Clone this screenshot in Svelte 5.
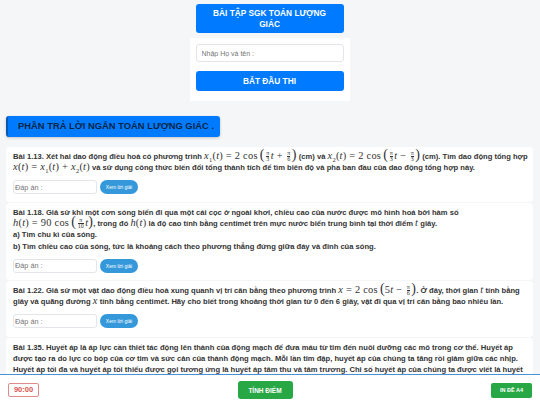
<script>
  const answerLabel = 'Đáp án :';
</script>

{#snippet frac(a, b)}
  <span class="frac"><span>{a}</span><span class="den">{b}</span></span>
{/snippet}

{#snippet answer()}
  <div class="answer">
    <input placeholder={answerLabel} />
    <button>Xem lời giải</button>
  </div>
{/snippet}

<div class="page">
  <div class="top">
    <div class="title">BÀI TẬP SGK TOÁN LƯỢNG GIÁC</div>
    <div class="start-box">
      <input class="name" placeholder="Nhập Họ và tên :" />
      <button class="start">BẮT ĐẦU THI</button>
    </div>
  </div>

  <h2 class="section">PHẦN TRẢ LỜI NGẮN TOÁN LƯỢNG GIÁC .</h2>

  <div class="card c1">
    <p>Bài 1.13. Xét hai dao động điều hoà có phương trình <span class="m"><i>x</i><sub>1</sub>(<i>t</i>) = 2 cos</span> <span class="m"><span class="paren">(</span>{@render frac('π', '3')}<i>t</i> + {@render frac('π', '6')}<span class="paren">)</span></span> (cm) và <span class="m"><i>x</i><sub>2</sub>(<i>t</i>) = 2 cos</span> <span class="m"><span class="paren">(</span>{@render frac('π', '3')}<i>t</i> − {@render frac('π', '3')}<span class="paren">)</span></span> (cm). Tìm dao động tổng hợp<br />
    <span class="m"><i>x</i>(<i>t</i>) = <i>x</i><sub>1</sub>(<i>t</i>) + <i>x</i><sub>2</sub>(<i>t</i>)</span> và sử dụng công thức biến đổi tổng thành tích để tìm biên độ và pha ban đầu của dao động tổng hợp này.</p>
    {@render answer()}
  </div>

  <div class="card c2">
    <p>Bài 1.18. Giả sử khi một cơn sóng biển đi qua một cái cọc ở ngoài khơi, chiều cao của nước được mô hình hoá bởi hàm số<br />
    <span class="m"><i>h</i>(<i>t</i>) = 90 cos</span> <span class="m"><span class="paren">(</span>{@render frac('π', '10')}<i>t</i><span class="paren">)</span></span>, trong đó <span class="m"><i>h</i>(<i>t</i>)</span> là độ cao tính bằng centimét trên mực nước biển trung bình tại thời điểm <span class="m"><i>t</i></span> giây.<br />
    a) Tìm chu kì của sóng.<br />
    b) Tìm chiều cao của sóng, tức là khoảng cách theo phương thẳng đứng giữa đáy và đỉnh của sóng.</p>
    {@render answer()}
  </div>

  <div class="card c3">
    <p>Bài 1.22. Giả sử một vật dao động điều hoà xung quanh vị trí cân bằng theo phương trình <span class="m"><i>x</i> = 2 cos</span> <span class="m"><span class="paren">(</span>5<i>t</i> − {@render frac('π', '6')}<span class="paren">)</span></span>. Ở đây, thời gian <span class="m"><i>t</i></span> tính bằng<br />
    giây và quãng đường <span class="m"><i>x</i></span> tính bằng centimét. Hãy cho biết trong khoảng thời gian từ 0 đến 6 giây, vật đi qua vị trí cân bằng bao nhiêu lần.</p>
    {@render answer()}
  </div>

  <div class="card">
    <p>Bài 1.35. Huyết áp là áp lực cần thiết tác động lên thành của động mạch để đưa máu từ tim đến nuôi dưỡng các mô trong cơ thể. Huyết áp<br />
    được tạo ra do lực co bóp của cơ tim và sức cản của thành động mạch. Mỗi lần tim đập, huyết áp của chúng ta tăng rồi giảm giữa các nhịp.<br />
    Huyết áp tối đa và huyết áp tối thiểu được gọi tương ứng là huyết áp tâm thu và tâm trương. Chỉ số huyết áp của chúng ta được viết là huyết</p>
  </div>
</div>

<div class="footer">
  <div class="timer">90:00</div>
  <button class="score">TÍNH ĐIỂM</button>
  <button class="print">IN ĐỀ A4</button>
</div>

<style>
  :global(body) { margin: 0; background: #f4f6f8; font-family: "Liberation Sans", Arial, sans-serif; overflow: hidden; }
  .page { height: 405px; overflow: hidden; padding: 4px 7px 0 6px; box-sizing: border-box; }
  .top { width: 160px; margin: 0 auto; display: flex; flex-direction: column; align-items: center; }
  .title { width: 148px; height: 29px; box-sizing: border-box; padding: 4px 12px; background: #007bff; color: #fff; border-radius: 3px; font-size: 8.3px; font-weight: bold; line-height: 10.5px; text-align: center; }
  .start-box { width: 160px; height: 63px; margin-top: 5px; box-sizing: border-box; padding: 6px; background: #fff; display: flex; flex-direction: column; gap: 9px; }
  .name { height: 18px; width: 100%; box-sizing: border-box; padding: 0 5px; border: 1px solid #e2e6ea; border-radius: 3px; font: 7px "Liberation Sans", sans-serif; }
  .start { height: 20px; border: 0; border-radius: 3px; background: #007bff; color: #fff; font: bold 8.3px "Liberation Sans", sans-serif; }
  .section { width: 214px; height: 21px; margin: 15px 0 0; box-sizing: border-box; padding-left: 10px; background: #007bff; border-left: 2px solid #0a58b0; border-radius: 3px; box-shadow: 0 1px 3px rgba(0, 0, 0, 0.2); color: #0b2545; font-size: 9.4px; font-weight: bold; line-height: 20px; white-space: nowrap; }
  .card { margin-top: 10px; padding: 4px 7px 0; background: #fff; border-radius: 4px; box-sizing: border-box; }
  .card + .card { margin-top: 1px; }
  .c1 { height: 55px; }
  .c2 { height: 77px; }
  .c3 { height: 56px; }
  p { margin: 0; color: #333; font-size: 7.6px; font-weight: bold; line-height: 11.2px; white-space: nowrap; }
  .m { font: normal 10.4px/0 "Liberation Serif", serif; letter-spacing: 0.25px; white-space: nowrap; }
  .m i { font-style: italic; }
  sub { font-size: 6.5px; line-height: 0; }
  .paren { font-size: 14px; line-height: 0; }
  .frac { display: inline-flex; flex-direction: column; align-items: center; vertical-align: middle; height: 12px; margin: -5px 1px; padding: 0 0.5px; font-size: 6px; line-height: 5.5px; letter-spacing: 0; }
  .den { align-self: stretch; text-align: center; border-top: 0.5px solid #333; }
  .answer { display: flex; gap: 3px; margin-top: 7px; height: 14px; }
  .answer input { width: 84px; height: 14px; box-sizing: border-box; padding: 0 1px; border: 1px solid #e2e6ea; border-radius: 3px; font: 7.3px "Liberation Sans", sans-serif; }
  .answer button { width: 38px; height: 14px; padding: 0; border: 0; border-radius: 7px; background: #3498db; color: #fff; font: 5px "Liberation Sans", sans-serif; }
  .footer { position: fixed; left: 0; right: 0; bottom: 0; height: 31px; box-sizing: border-box; padding: 0 8px; background: #fff; border-top: 1px solid #4a90d9; display: flex; align-items: center; justify-content: space-between; }
  .timer { width: 31px; height: 14px; box-sizing: border-box; border: 1px solid #e08a8a; border-radius: 2px; color: #d9534f; font-size: 7.5px; font-weight: bold; line-height: 12px; text-align: center; }
  .score { width: 55px; height: 18px; padding: 0; border: 0; border-radius: 3px; background: #28a745; color: #fff; font: bold 6.5px "Liberation Sans", sans-serif; }
  .print { width: 41px; height: 15px; padding: 0; border: 0; border-radius: 2px; background: #28a745; color: #fff; font: bold 5.5px "Liberation Sans", sans-serif; }
</style>
